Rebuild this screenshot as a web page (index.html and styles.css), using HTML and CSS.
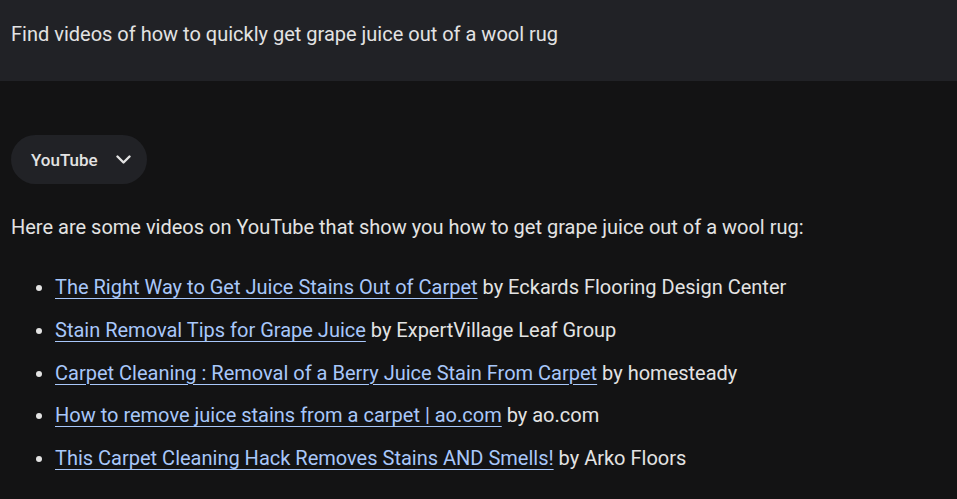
FILE: index.html
```html
<!DOCTYPE html>
<html lang="en">

<head>
    <meta charset="UTF-8">
    <title>Video search</title>
    <link rel="stylesheet" href="styles.css">
</head>

<body>
    <header class="query">
        <p>Find videos of how to quickly get grape juice out of a wool rug</p>
    </header>

    <main class="answer">
        <button class="source-chip">
            <span>YouTube</span>
            <svg width="15" height="9" viewBox="0 0 15 9" aria-hidden="true">
                <path d="M1.5 1.5l6 6 6-6" fill="none" stroke="#e3e3e3" stroke-width="2.4" stroke-linecap="round" stroke-linejoin="round"/>
            </svg>
        </button>

        <p class="intro">Here are some videos on YouTube that show you how to get grape juice out of a wool rug:</p>

        <ul class="videos">
            <li><a href="#">The Right Way to Get Juice Stains Out of Carpet</a> by Eckards Flooring Design Center</li>
            <li><a href="#">Stain Removal Tips for Grape Juice</a> by ExpertVillage Leaf Group</li>
            <li><a href="#">Carpet Cleaning : Removal of a Berry Juice Stain From Carpet</a> by homesteady</li>
            <li><a href="#">How to remove juice stains from a carpet | ao.com</a> by ao.com</li>
            <li><a href="#">This Carpet Cleaning Hack Removes Stains AND Smells!</a> by Arko Floors</li>
        </ul>
    </main>
</body>

</html>
```

FILE: styles.css
```css
body {
    margin: 0;
    background-color: #131314;
    color: #e3e3e3;
    font-family: Roboto, "Noto Sans", sans-serif;
    font-size: 20px;
}

.query {
    background-color: #212226;
    height: 81px;
    padding: 0 11px;
    box-sizing: border-box;
}

.query p {
    margin: 0;
    padding-top: 22px;
    line-height: 24px;
}

.answer {
    padding: 54px 11px 0;
}

.source-chip {
    display: flex;
    align-items: center;
    gap: 18px;
    height: 49px;
    padding: 0 16px 0 20px;
    border: none;
    border-radius: 25px;
    background-color: #212226;
    color: #e3e3e3;
    font-family: Roboto, sans-serif;
    font-size: 17px;
    font-weight: 500;
}

.intro {
    margin: 29px 0 0;
    line-height: 28px;
}

.videos {
    margin: 32px 0 0;
    padding-left: 44px;
}

.videos li {
    line-height: 28px;
    margin-bottom: 14.75px;
}

.videos a {
    color: #a8c7fa;
    text-decoration-thickness: 1px;
    text-underline-offset: 4px;
}
```
